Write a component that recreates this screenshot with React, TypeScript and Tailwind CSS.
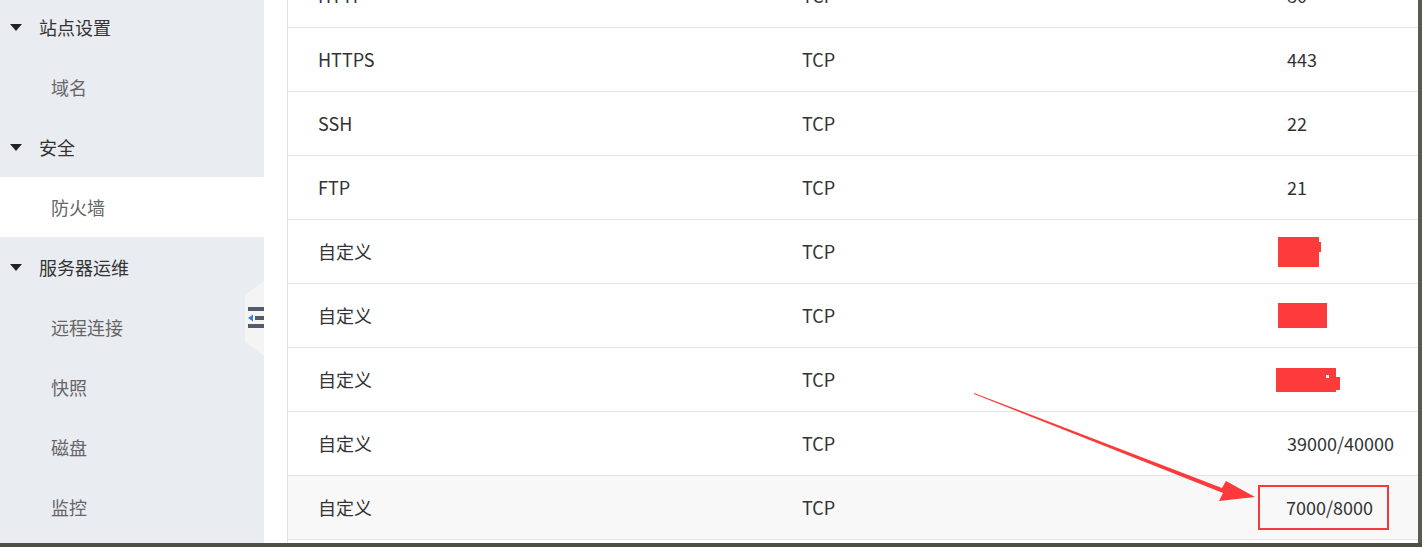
import { ReactNode } from 'react'

const font = { fontFamily: '"Noto Sans CJK SC", "Noto Sans", sans-serif' }

type Row = { name: string; proto: string; port: ReactNode; hover?: boolean }

function Caret() {
  return (
    <svg width="12" height="7" viewBox="0 0 12 7" className="shrink-0">
      <path d="M0 0h12L6 7z" fill="#222" />
    </svg>
  )
}

function GroupTitle({ label }: { label: string }) {
  return (
    <div className="h-[60px] flex items-center pl-[10px] gap-[17px] text-[18px] text-[#333]">
      <Caret />
      <span>{label}</span>
    </div>
  )
}

function SubItem({ label, active }: { label: string; active?: boolean }) {
  return (
    <div
      className={
        'h-[60px] flex items-center pl-[51px] text-[18px] text-[#666] ' +
        (active ? 'bg-white' : '')
      }
    >
      {label}
    </div>
  )
}

// redacted port values
function Blot({ kind }: { kind: number }) {
  if (kind === 1)
    return (
      <div className="relative -ml-[9px] w-[41px] h-[30px] bg-[#fd3b3b]">
        <div className="absolute left-[41px] top-[5px] w-[2px] h-[10px] bg-[#fd3b3b]" />
      </div>
    )
  if (kind === 2) return <div className="-ml-[9px] w-[49px] h-[25px] bg-[#fd3b3b]" />
  return (
    <div className="relative w-[60px] h-[24px] bg-[#fd3b3b] -ml-[11px]">
      <div className="absolute left-[50px] top-[7px] w-[3px] h-[3px] bg-white" />
      <div className="absolute left-[60px] top-[9px] w-[4px] h-[13px] bg-[#fd3b3b]" />
    </div>
  )
}

const rows: Row[] = [
  { name: 'HTTP', proto: 'TCP', port: '80' },
  { name: 'HTTPS', proto: 'TCP', port: '443' },
  { name: 'SSH', proto: 'TCP', port: '22' },
  { name: 'FTP', proto: 'TCP', port: '21' },
  { name: '自定义', proto: 'TCP', port: <Blot kind={1} /> },
  { name: '自定义', proto: 'TCP', port: <Blot kind={2} /> },
  { name: '自定义', proto: 'TCP', port: <Blot kind={3} /> },
  { name: '自定义', proto: 'TCP', port: '39000/40000' },
  {
    name: '自定义',
    proto: 'TCP',
    hover: true,
    port: (
      <span className="-ml-[29px] pl-[26px] pr-[14px] py-[6px] border-2 border-[#f43a3a] leading-[29px]">
        7000/8000
      </span>
    ),
  },
]

export default function App() {
  return (
    <div
      className="relative w-[1422px] h-[547px] overflow-hidden bg-white flex flex-col"
      style={font}
    >
      <div className="flex flex-1 min-h-0 border-r-4 border-[#5a5b50]">
        {/* sidebar */}
        <aside className="relative w-[264px] shrink-0 bg-[#e9ecf1] overflow-hidden">
          <div className="-mt-[3px]">
            <GroupTitle label="站点设置" />
            <SubItem label="域名" />
            <GroupTitle label="安全" />
            <SubItem label="防火墙" active />
            <GroupTitle label="服务器运维" />
            <SubItem label="远程连接" />
            <SubItem label="快照" />
            <SubItem label="磁盘" />
            <SubItem label="监控" />
          </div>
          {/* collapse tab */}
          <svg
            className="absolute left-[245px] top-[281px]"
            width="19"
            height="75"
            viewBox="0 0 19 75"
          >
            <path d="M19 0L0 14v47l19 14z" fill="#f4f4f5" />
            <rect x="3" y="26" width="16" height="4" fill="#505c6c" />
            <path d="M3 37l5-3.5v7z" fill="#3d7fd0" />
            <rect x="10" y="35" width="9" height="4" fill="#505c6c" />
            <rect x="3" y="43" width="16" height="4" fill="#505c6c" />
          </svg>
        </aside>

        <div className="w-[23px] shrink-0" />

        {/* table */}
        <main className="flex-1 border-l border-[#dfe3e8] overflow-hidden">
          <div className="-mt-[36px]">
            {rows.map((r, i) => (
              <div
                key={i}
                className={
                  'h-[64px] flex items-center border-b border-[#e1e5ea] text-[18px] text-[#333] ' +
                  (r.hover ? 'bg-[#f8f8f8]' : '')
                }
              >
                <div className="w-[514px] pl-[30px]">{r.name}</div>
                <div className="w-[485px]">{r.proto}</div>
                <div className="flex-1 flex items-center">{r.port}</div>
              </div>
            ))}
          </div>
        </main>
      </div>
      <div className="h-[4px] shrink-0 bg-[#4e4f45]" />

      {/* annotation arrow */}
      <svg
        className="absolute left-0 top-0 pointer-events-none"
        width="1422"
        height="547"
        viewBox="0 0 1422 547"
      >
        <path
          d="M974 393L1222 488L1226 481L1255 497L1219 501L1223 493L974 394z"
          fill="#fd3a3a"
        />
      </svg>
    </div>
  )
}
